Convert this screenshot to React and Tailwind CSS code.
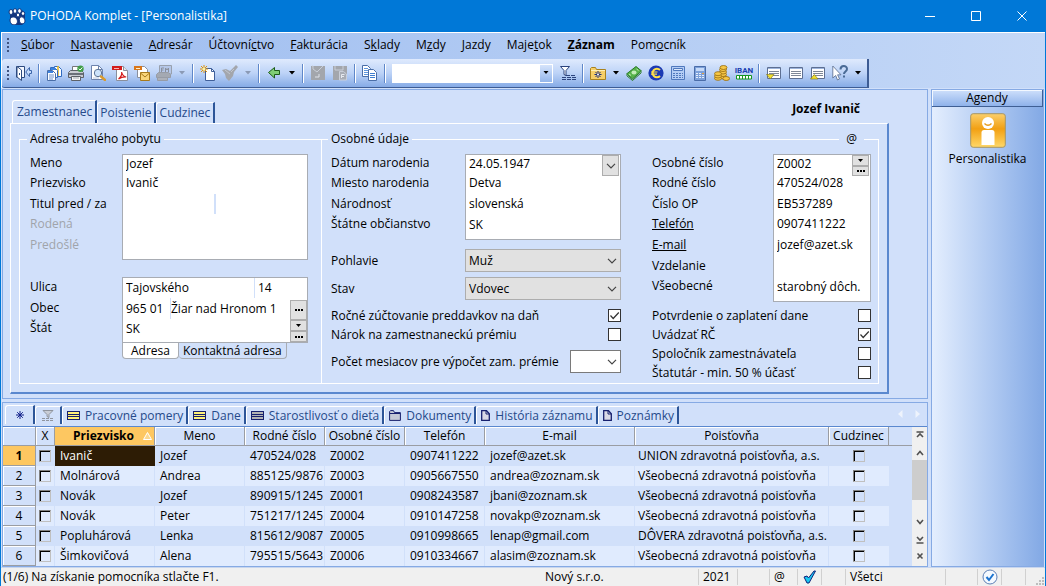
import React from "react";

const MENU = [
  ["", "S", "úbor"],
  ["", "N", "astavenie"],
  ["", "A", "dresár"],
  ["Účtovní", "c", "tvo"],
  ["", "F", "akturácia"],
  ["S", "k", "lady"],
  ["M", "z", "dy"],
  ["", "J", "azdy"],
  ["Maje", "t", "ok"],
  ["", "Z", "áznam"],
  ["Pom", "o", "cník"],
];

const ROWS = [
  ["Ivanič", "Jozef", "470524/028", "Z0002", "0907411222", "jozef@azet.sk", "UNION zdravotná poisťovňa, a.s."],
  ["Molnárová", "Andrea", "885125/9876", "Z0003", "0905667550", "andrea@zoznam.sk", "Všeobecná zdravotná poisťovňa"],
  ["Novák", "Jozef", "890915/1245", "Z0001", "0908243587", "jbani@zoznam.sk", "Všeobecná zdravotná poisťovňa"],
  ["Novák", "Peter", "751217/1245", "Z0004", "0910147258", "novakp@zoznam.sk", "Všeobecná zdravotná poisťovňa"],
  ["Popluhárová", "Lenka", "815612/9087", "Z0005", "0910998665", "lenap@gmail.com", "DÔVERA zdravotná poisťovňa, a.s."],
  ["Šimkovičová", "Alena", "795515/5643", "Z0006", "0910334667", "alasim@zoznam.sk", "Všeobecná zdravotná poisťovňa"],
];

function Svg({ children, w = 16, h = 16, className = "" }) {
  return (
    <svg width={w} height={h} viewBox={`0 0 ${w} ${h}`} className={`block shrink-0 ${className}`} aria-hidden="true">
      {children}
    </svg>
  );
}

const Page = ({ x, y, w = 8, h = 10, fill = "#fff", stroke = "#4a6ea8" }) => (
  <path d={`M${x} ${y}h${w - 3}l3 3v${h - 3}h-${w}z`} fill={fill} stroke={stroke} />
);

const ICONS = {
  exit: (
    <Svg>
      <path d="M.5 12.500V1.500H8.500V12.500H6" fill="#f4f8ff" stroke="#2c4a80" />
      <path d="M1 1.500L5.500 5V15.500L1 12z" fill="#fff" stroke="#2c4a80" />
      <path d="M3.500 8v2" stroke="#2c4a80" />
      <path d="M13.500 2.500L9.800 7l3.700 4.500V8.500H15.500v-3h-2z" fill="#c6dcfb" stroke="#3d66ab" />
    </Svg>
  ),
  docs: (
    <Svg>
      <path d="M8.500 1.500h4l3 3v7h-7z" fill="#fff" stroke="#2f6ac0" />
      <path d="M12 1v10" stroke="#e3b31c" strokeWidth="1.500" />
      <Page x={4.5} y={2.5} w={7} h={10} stroke="#2f6ac0" />
      <Page x={1.5} y={5.5} w={8} h={10} stroke="#4a6ea8" />
      <path d="M5 3h5v2H5z" fill="#3c82de" />
      <path d="M2 6h5v2H2z" fill="#3c82de" />
      <path d="M3 10h5M3 12h5M3 14h4" stroke="#6f94cd" />
    </Svg>
  ),
  print: (
    <Svg>
      <path d="M4.500 6V1.500h7V6" fill="#fff" stroke="#777" />
      <path d="M.5 7.500l2-2h11l2 2v5H.5z" fill="#c9ccd2" stroke="#5d6168" />
      <path d="M1 8h14v2H1z" fill="#6a6f78" />
      <path d="M3.500 11.500h9v4h-9z" fill="#f4f4f4" stroke="#5d6168" />
      <path d="M5 12.500h6v1H5z" fill="#a7abb2" />
      <circle cx="12.500" cy="3.700" r="3.200" fill="#3f9d46" />
      <path d="M10.800 3.700l1.300 1.300 2.200-2.500" stroke="#fff" fill="none" />
    </Svg>
  ),
  preview: (
    <Svg>
      <path d="M1.500 .5h7l4 4v10h-11z" fill="#fff" stroke="#6d83ad" />
      <path d="M8.500 .5v4h4" fill="none" stroke="#6d83ad" />
      <path d="M3 13h6" stroke="#b8c8e4" />
      <circle cx="8" cy="8" r="3.700" fill="#cde3fb" stroke="#5b7396" />
      <path d="M11 11.500l4 3.500" stroke="#d99a2b" strokeWidth="2.400" strokeLinecap="round" />
    </Svg>
  ),
  pdf: (
    <Svg>
      <path d="M4.500 1.500h7l4 4v10h-11z" fill="#fff" stroke="#8a8f9c" />
      <path d="M11.500 1.500v4h4" fill="#e3e6ec" stroke="#8a8f9c" />
      <path d="M0 1h10v4H0z" fill="#d21c1c" />
      <path d="M2 3.500h5" stroke="#f6b5b5" />
      <path d="M6.500 14c2-1.500 3.500-4 3.200-7 .5 3 2 4.500 4.500 5-3-.3-5 .3-7.700 2z" fill="none" stroke="#d21c1c" strokeWidth="1.200" />
    </Svg>
  ),
  mail: (
    <Svg>
      <path d="M3.500 1.500h7l3 3v8h-10z" fill="#fff" stroke="#8a8f9c" />
      <path d="M0 1h8v4H0z" fill="#d8761a" />
      <path d="M2 3.500h4" stroke="#fff0cf" />
      <path d="M6.500 7.500h9v8h-9z" fill="#f8d57b" stroke="#a87a1c" />
      <path d="M6.500 8l4.500 4 4.500-4" fill="none" stroke="#a87a1c" />
    </Svg>
  ),
  fm: (
    <Svg>
      <path d="M3.500 7V.5h12V9h-2" fill="#b5c7e8" stroke="#98a0ad" />
      <path d="M5.500 7V3H8M5.500 5h2M9.500 7V3l1.500 2L12.500 3v4" stroke="#8a909c" fill="none" />
      <path d="M.5 9.500l2-2h10l2 2v3H.5z" fill="#a4a9b2" stroke="#979ca6" />
      <path d="M1.500 12.500h10v3h-10z" fill="#adb1b9" stroke="#979ca6" />
    </Svg>
  ),
  fresh: (
    <Svg>
      <path d="M5.500 3.500h6l3 3v9h-9z" fill="#fff" stroke="#3f5f9a" />
      <path d="M11.500 3.500v3h3" fill="none" stroke="#3f5f9a" />
      <path d="M4 0v8M0 4h8M1 1l6 6M7 1L1 7" stroke="#e0930a" />
      <circle cx="4" cy="4" r="1.500" fill="#fff3a0" />
    </Svg>
  ),
  brush: (
    <Svg>
      <path d="M0 5l4-1 4 2 6-6 2 2-4 5-1 4-4 5-3-3-1-4z" fill="#a3a6ac" />
      <path d="M3 5l5 4M9 7l3-3" stroke="#c3c7cf" />
    </Svg>
  ),
  back: (
    <Svg>
      <path d="M8.500 2.500v3h5v4h-5v3.500l-6-5.500z" fill="#7fce75" stroke="#1d5c1a" />
    </Svg>
  ),
  book: (
    <Svg>
      <path d="M1 1h14v14H1z" fill="#a3a6ac" />
      <path d="M2 1h1v3l4 3 6-6" stroke="#c9ced8" fill="none" />
      <path d="M5 12h4v-3" stroke="#dfe3ea" fill="none" />
    </Svg>
  ),
  save: (
    <Svg>
      <path d="M1 1h14v14H1z" fill="#a3a6ac" />
      <path d="M3 1v4h8V1" stroke="#c9ced8" fill="none" />
      <path d="M7.500 6.500h4l3 2.500v6h-7z" fill="#a9adb5" stroke="#c9ced8" />
      <path d="M9.500 13V9.500h3M9.500 11.500h2.500" stroke="#e6e9ef" fill="none" />
    </Svg>
  ),
  copy: (
    <Svg>
      <Page x={0.5} y={0.5} w={8} h={11} />
      <path d="M2 3.500h4M2 5.500h5M2 7.500h5M2 9.500h5" stroke="#5f96dd" />
      <Page x={6.5} y={4.5} w={8} h={11} />
      <path d="M8 8.500h5M8 10.500h5M8 12.500h5" stroke="#3f7ed0" />
    </Svg>
  ),
  filter: (
    <Svg>
      <path d="M.5 1.500h9l-3.500 4v5l-2-1V5.500z" fill="#fff" stroke="#2b437c" />
      <path d="M6 10.500h10M2 12.500h14M2 14.500h14" stroke="#2b437c" strokeDasharray="4 1" />
    </Svg>
  ),
  folderStar: (
    <Svg>
      <path d="M.5 3.500l1-1h4l1 2h9v10H.5z" fill="#f6cf68" stroke="#a8821f" />
      <path d="M1 5.500h14" stroke="#fff0b5" />
      <path d="M8 6v7M4.500 9.500h7M5.500 7l5 5M10.500 7l-5 5" stroke="#1b2d7a" />
      <circle cx="8" cy="9.500" r="1" fill="#fff" />
    </Svg>
  ),
  money: (
    <Svg>
      <path d="M.5 9L10 1.500l5.500 4.500-9 8z" fill="#56b24a" stroke="#2a7a26" />
      <path d="M.5 10.500l6 5 9-8" fill="none" stroke="#2a7a26" />
      <ellipse cx="8" cy="7.500" rx="2.500" ry="2" fill="#c4ecb8" />
      <path d="M3 9l2 1.500M10.500 4l2 1.500" stroke="#c4ecb8" />
    </Svg>
  ),
  euro: (
    <Svg>
      <circle cx="8" cy="8" r="7.600" fill="#1b39b4" />
      <path d="M12 5A4.300 4.300 0 1 0 12 11" fill="none" stroke="#ffe04a" strokeWidth="2" />
      <path d="M3 7h6.500M3 9.200h6" stroke="#ffe04a" strokeWidth="1.200" />
    </Svg>
  ),
  calc: (
    <Svg>
      <path d="M1.500 1.500h13v13h-13z" fill="#b4cdf5" stroke="#4f78bd" />
      <path d="M3.500 3.500h9v2h-9z" fill="#dbe8fc" stroke="#4f78bd" />
      <path d="M3 8.500h10M3 10.500h10M3 12.500h10" stroke="#4f78bd" strokeDasharray="2 1" />
    </Svg>
  ),
  calc2: (
    <Svg>
      <path d="M2.500 1.500h11v14h-11z" fill="#7da1da" stroke="#4a6ca8" />
      <path d="M4 3h8v3H4z" fill="#c6daf8" />
      <path d="M4 8.500h8M4 10.500h8M4 12.500h8" stroke="#e6effc" strokeDasharray="2 1" />
      <path d="M10 8.500h2" stroke="#e8a13a" />
    </Svg>
  ),
  coins: (
    <Svg>
      <g fill="#f6c746" stroke="#96690c" strokeWidth=".8">
        <ellipse cx="9" cy="12" rx="3.500" ry="2" />
        <ellipse cx="9" cy="9.500" rx="3.500" ry="2" />
        <ellipse cx="9" cy="7" rx="3.500" ry="2" />
        <ellipse cx="9" cy="4.500" rx="3.500" ry="2" />
        <ellipse cx="9.500" cy="2.500" rx="3.500" ry="2" />
        <ellipse cx="4" cy="13.300" rx="3.500" ry="2" />
        <ellipse cx="4" cy="11" rx="3.500" ry="2" />
        <ellipse cx="4" cy="8.700" rx="3.500" ry="2" />
        <ellipse cx="12.200" cy="13.500" rx="3.400" ry="2" />
      </g>
    </Svg>
  ),
  iban: (
    <span className="flex flex-col items-center">
      <span className="font-['Roboto','Liberation_Sans',sans-serif] text-[8px] leading-[9px] font-bold text-[#1a3fb0]">IBAN</span>
      <Svg w={16} h={5}>
        <path d="M.5 .5h15v3.500H.5z" fill="#fff" stroke="#14961e" />
        <path d="M3.500 0v4M6.500 0v4M9.500 0v4M12.500 0v4" stroke="#14961e" />
      </Svg>
    </span>
  ),
  winDown: <WindowIcon mark="M.5 9.500h7.500l-3.700 4.500z" />,
  win: <WindowIcon />,
  winUp: <WindowIcon mark="M.5 14h7.500l-3.700-4.500z" />,
  help: (
    <Svg>
      <path d="M.8 1v12l2.900-2.500 1.800 4.500 2-1-1.900-4.200H9z" fill="#fff" stroke="#56688c" strokeWidth=".8" />
      <path d="M8.500 4.500C8.500 0 15 0 15 4c0 2.500-3 2.500-3 5" fill="none" stroke="#4a6b96" strokeWidth="2" />
      <path d="M11 10.500h2v2h-2z" fill="#4a6b96" />
    </Svg>
  ),
};

function WindowIcon({ mark }) {
  return (
    <Svg>
      <path d="M1.500 2.500h13v11h-13z" fill="#fff" stroke="#5d6f92" />
      <path d="M2 3.500h12" stroke="#9db4dc" />
      <path d="M3 6.500h10M3 8.500h10M3 10.500h10" stroke="#7e8797" />
      {mark && <path d={mark} fill="#f2e02e" stroke="#7a7010" strokeWidth=".6" />}
    </Svg>
  );
}

const Tool = ({ icon, label }) => (
  <button type="button" aria-label={label} className="flex h-6 w-[22px] items-center justify-center">
    {ICONS[icon]}
  </button>
);

const Drop = ({ off }) => (
  <button type="button" aria-label="Ďalšie možnosti" className="flex h-6 w-[14px] items-center justify-center">
    <Svg w={6} h={4}>
      <path d="M0 0h6L3 3.500z" fill={off ? "#8b9ab5" : "#000"} />
    </Svg>
  </button>
);

const Sep = () => <span className="mx-[3px] h-[19px] w-[2px] border-r border-l border-l-[#5f87c9] border-r-white" />;

const Grip = () => (
  <span className="flex w-[2px] flex-col gap-[2px]">
    {[0, 1, 2, 3].map((i) => (
      <span key={i} className="h-[2px] w-[2px] bg-[#3f5480]" />
    ))}
  </span>
);

const Chevron = () => (
  <Svg w={10} h={6}>
    <path d="M1 .8l4 4 4-4" fill="none" stroke="#444" strokeWidth="1.200" />
  </Svg>
);

const Dots = () => (
  <Svg w={8} h={2}>
    <path d="M0 0h2v2H0zM3 0h2v2H3zM6 0h2v2H6z" fill="#000" />
  </Svg>
);

const SMALL_BTN = "flex items-center justify-center border border-[#adadad] bg-[#e1e1e1]";
const BOX = "border border-[#a8acb3] bg-white";
const INPUT = "w-full min-w-0 bg-transparent p-0 pl-[3px] outline-none";

function Labels({ items, rows }) {
  return (
    <div className={`grid ${rows} items-center`}>
      {items.map(([text, id, kind]) => (
        <label
          key={id}
          htmlFor={id}
          className={`whitespace-nowrap ${kind === "off" ? "text-[#a0a4aa]" : ""} ${kind === "link" ? "underline" : ""}`}
        >
          {text}
        </label>
      ))}
    </div>
  );
}

function Check({ id, on, label }) {
  return (
    <div className="flex h-[19px] items-center justify-between">
      <label htmlFor={id} className="whitespace-nowrap">{label}</label>
      <span className="relative">
        <input id={id} type="checkbox" defaultChecked={on} className="block h-[13px] w-[13px] appearance-none border border-[#333] bg-white" />
        {on && (
          <Svg w={13} h={13} className="pointer-events-none absolute top-0 left-0">
            <path d="M2.500 6.500l2.700 3L10.800 3.500" fill="none" stroke="#333" strokeWidth="1.200" />
          </Svg>
        )}
      </span>
    </div>
  );
}

function Select({ id, value, className }) {
  return (
    <span className={`relative flex ${className}`}>
      <select id={id} defaultValue={value} className="h-[23px] w-full appearance-none border border-inherit bg-transparent py-0 pl-[3px] outline-none">
        <option value={value}>{value}</option>
      </select>
      <span className="pointer-events-none absolute inset-y-0 right-1 flex items-center">
        <Chevron />
      </span>
    </span>
  );
}

function GridCheck({ label }) {
  return (
    <input
      type="checkbox"
      aria-label={label}
      className="mx-auto block h-3 w-3 appearance-none border border-t-[#808080] border-r-[#c0c0c0] border-b-[#c0c0c0] border-l-[#808080] shadow-[inset_1px_1px_0_#000000]"
    />
  );
}

const StripeIcon = ({ grey }) => (
  <Svg w={13} h={9}>
    <path d="M0 0h13v9H0z" fill="#17206e" />
    <path d="M1 1h11v2H1zM1 4h11v1H1zM1 6h11v2H1z" fill={grey ? "#b4b4b4" : "#fff27a"} />
  </Svg>
);

const DocIcon = () => (
  <Svg w={9} h={11}>
    <path d="M.7 .7h4.800l2.800 3v6.600H.7z" fill="#d9d9e6" stroke="#17206e" strokeWidth="1.300" />
    <path d="M5 .7v3.300h3.300" fill="none" stroke="#17206e" />
  </Svg>
);

const FolderIcon = () => (
  <Svg w={12} h={11}>
    <path d="M.6 10.400V1.600L1.500 .6h3l1 2h5.900v7.800z" fill="#c4c9d6" stroke="#17206e" />
    <path d="M1 3.500h10" stroke="#17206e" />
  </Svg>
);

const AGENDA_TABS = [
  ["Pracovné pomery", <StripeIcon key="a" />],
  ["Dane", <StripeIcon key="b" />],
  ["Starostlivosť o dieťa", <StripeIcon key="c" grey />],
  ["Dokumenty", <FolderIcon key="d" />],
  ["História záznamu", <DocIcon key="e" />],
  ["Poznámky", <DocIcon key="f" />],
];

const TAB = "flex items-center whitespace-nowrap rounded-tl-[3px] border-t border-l border-r-2 border-t-white border-l-white border-r-[#2c5598] text-[#264a8a]";

function TitleBar() {
  return (
    <header className="flex h-8 items-center bg-[#0078d7] pl-[7px] text-white">
      <Svg w={18} h={17}>
        <path d="M2 2h5l3 3 4-3 3 3v9l-3 3H4l-2-4z" fill="#12357e" />
        <g fill="#fff" stroke="#12357e">
          <ellipse cx="3" cy="4" rx="2" ry="2.500" />
          <ellipse cx="7" cy="3" rx="1.900" ry="2.300" />
          <ellipse cx="11.500" cy="3" rx="1.900" ry="2.300" />
          <ellipse cx="15" cy="5.500" rx="1.700" ry="2" />
          <ellipse cx="10" cy="7" rx="1.700" ry="2" />
          <path d="M2 12c0-3 4-4 6-2s2 5.500-.5 6.500C4.500 17.500 2 15.500 2 12z" />
          <path d="M12.500 9c2-.8 4.500 1.500 4.500 4 0 3-3.500 3.500-5 1.500-1-1.600-1-4.500.5-5.500z" />
        </g>
      </Svg>
      <h1 className="flex-1 pl-1">POHODA Komplet - [Personalistika]</h1>
      {[
        ["Minimalizovať", "M0 5.500h10"],
        ["Maximalizovať", "M.5 .5h9v9h-9z"],
        ["Zavrieť", "M.5 .5l9 9M9.500 .5l-9 9"],
      ].map(([name, d]) => (
        <button key={name} type="button" aria-label={name} className="flex h-full w-[46px] items-center justify-center">
          <Svg w={10} h={10}>
            <path d={d} fill="none" stroke="#fff" />
          </Svg>
        </button>
      ))}
    </header>
  );
}

function Toolbar() {
  return (
    <div role="toolbar" aria-label="Panel nástrojov" className="flex h-[29px] w-fit items-center rounded-l-[3px] border-r-2 border-b border-[#3d5c94] bg-linear-to-b from-[#dfeafd] via-[#bdd3f7] to-[#86abe6] pr-[2px] pl-[5px]">
      <Grip />
      <span className="w-1" />
      <Tool icon="exit" label="Zavrieť agendu" />
      <Sep />
      <Tool icon="docs" label="Zostavy" />
      <Tool icon="print" label="Tlač" />
      <Tool icon="preview" label="Náhľad" />
      <Tool icon="pdf" label="PDF" />
      <Tool icon="mail" label="E-mail" />
      <Tool icon="fm" label="FM" />
      <Drop off />
      <Sep />
      <Tool icon="fresh" label="Nový záznam" />
      <Tool icon="brush" label="Označiť" />
      <Drop off />
      <Sep />
      <Tool icon="back" label="Späť" />
      <Drop />
      <Sep />
      <Tool icon="book" label="Uložiť" />
      <Tool icon="save" label="Uložiť ako" />
      <Sep />
      <Tool icon="copy" label="Kopírovať" />
      <Sep />
      <span className="mr-1 ml-[3px] flex h-[19px] w-[161px] border border-white bg-white">
        <input aria-label="Hľadať" className="w-full min-w-0 bg-white px-1 outline-none" />
        <button type="button" aria-label="Zoznam" className="flex w-3 shrink-0 items-center justify-center bg-linear-to-b from-[#d6e4fb] to-[#94b6eb]">
          <Svg w={6} h={4}>
            <path d="M.5 0h5L3 3z" fill="#000" />
          </Svg>
        </button>
      </span>
      <Tool icon="filter" label="Filter" />
      <Sep />
      <Tool icon="folderStar" label="Obľúbené" />
      <Drop />
      <Tool icon="money" label="Platby" />
      <Tool icon="euro" label="Euro" />
      <Tool icon="calc" label="Výpočet" />
      <Tool icon="calc2" label="Kalkulačka" />
      <Tool icon="coins" label="Mince" />
      <Tool icon="iban" label="IBAN" />
      <Sep />
      <Tool icon="winDown" label="Dolná tabuľka" />
      <Tool icon="win" label="Tabuľka" />
      <Tool icon="winUp" label="Horný formulár" />
      <Tool icon="help" label="Pomocník" />
      <Drop />
    </div>
  );
}

function AddressGroup() {
  return (
    <fieldset className="w-[303px] shrink-0 border border-white pr-[13px] pb-6 pl-[10px]">
      <legend className="-ml-[3px] px-[3px] leading-4">Adresa trvalého pobytu</legend>
      <div className="grid grid-cols-[92px_1fr] pt-[7px]">
        <Labels
          rows="grid-rows-[18px_21px_21px_20px_21px]"
          items={[
            ["Meno", "meno"],
            ["Priezvisko", "priezvisko"],
            ["Titul pred / za", "titul"],
            ["Rodená", "rodena", "off"],
            ["Predošlé", "predosle", "off"],
          ]}
        />
        <div className={`${BOX} grid grid-rows-[17px_21px_21px_20px_25px] items-center`}>
          <input id="meno" defaultValue="Jozef" className={INPUT} />
          <input id="priezvisko" defaultValue="Ivanič" className={INPUT} />
          <span className="flex h-5">
            <input id="titul" className={INPUT} />
            <input aria-label="Titul za" className={`${INPUT} border-l-2 border-[#d1e0fa]`} />
          </span>
          <input id="rodena" className={INPUT} />
          <input id="predosle" className={INPUT} />
        </div>
      </div>
      <div className="grid grid-cols-[92px_1fr] pt-[17px]">
        <Labels
          rows="grid-rows-[20px_21px_20px]"
          items={[
            ["Ulica", "ulica"],
            ["Obec", "psc"],
            ["Štát", "stat"],
          ]}
        />
        <div className={`${BOX} flex`}>
          <div className="grid flex-1 grid-rows-[20px_21px_20px] pb-[3px]">
            <span className="grid grid-cols-[131px_1fr]">
              <input id="ulica" defaultValue="Tajovského" className={INPUT} />
              <input aria-label="Číslo domu" defaultValue="14" className={`${INPUT} border-l border-[#d1e0fa]`} />
            </span>
            <span className="grid grid-cols-[47px_1fr]">
              <input id="psc" defaultValue="965 01" className={INPUT} />
              <input aria-label="Obec" defaultValue="Žiar nad Hronom 1" className="w-full min-w-0 border-l border-[#d1e0fa] bg-transparent outline-none" />
            </span>
            <input id="stat" defaultValue="SK" className={INPUT} />
          </div>
          <div className="flex w-[17px] flex-col pt-[22px]">
            <button type="button" aria-label="Vybrať obec" className={`${SMALL_BTN} h-5`}><Dots /></button>
            <button type="button" aria-label="Zoznam štátov" className={`${SMALL_BTN} h-[11px]`}>
              <Svg w={5} h={3}><path d="M0 0h5L2.500 3z" fill="#000" /></Svg>
            </button>
            <button type="button" aria-label="Vybrať štát" className={`${SMALL_BTN} h-[11px]`}><Dots /></button>
          </div>
        </div>
        <span />
        <div className="flex" role="tablist">
          <button type="button" role="tab" className="h-4 rounded-b-[4px] border border-t-0 border-[#a8acb3] bg-white px-2 leading-[14px]">Adresa</button>
          <button type="button" role="tab" className="h-4 rounded-b-[4px] border border-t-0 border-l-0 border-[#a8acb3] bg-[#d1e0fa] px-[4px] leading-[14px]">Kontaktná adresa</button>
        </div>
      </div>
    </fieldset>
  );
}

function PersonalGroup() {
  return (
    <fieldset className="relative flex-1 border border-l-0 border-white pr-[7px] pl-[9px]">
      <legend className="-ml-[3px] px-[3px] leading-4">Osobné údaje</legend>
      <span className="absolute -top-4 right-[14px] bg-[#d1e0fa] px-[7px] leading-4">@</span>
      <div className="flex justify-between gap-[30px] pt-[7px]">
        <div className="w-[290px]">
          <div className="grid grid-cols-[1fr_156px]">
            <Labels
              rows="grid-rows-[18px_21px_21px_20px]"
              items={[
                ["Dátum narodenia", "datum"],
                ["Miesto narodenia", "miesto"],
                ["Národnosť", "narodnost"],
                ["Štátne občianstvo", "obcianstvo"],
              ]}
            />
            <div className={`${BOX} grid grid-rows-[17px_21px_21px_25px]`}>
              <span className="relative flex">
                <input id="datum" defaultValue="24.05.1947" className={INPUT} />
                <button type="button" aria-label="Kalendár" className={`${SMALL_BTN} absolute top-0 right-[1px] h-[21px] w-[17px]`}><Chevron /></button>
              </span>
              <input id="miesto" defaultValue="Detva" className={INPUT} />
              <input id="narodnost" defaultValue="slovenská" className={INPUT} />
              <input id="obcianstvo" defaultValue="SK" className={`${INPUT} h-5`} />
            </div>
          </div>
          <div className="grid grid-cols-[1fr_156px] items-center gap-y-[5px] pt-[9px] pb-[6px]">
            <label htmlFor="pohlavie">Pohlavie</label>
            <Select id="pohlavie" value="Muž" className="border-[#adadad] bg-[#e1e1e1]" />
            <label htmlFor="stav">Stav</label>
            <Select id="stav" value="Vdovec" className="border-[#adadad] bg-[#e1e1e1]" />
          </div>
          <Check id="zuct" on label="Ročné zúčtovanie preddavkov na daň" />
          <Check id="narok" label="Nárok na zamestnaneckú prémiu" />
          <div className="flex items-center justify-between pt-[6px]">
            <label htmlFor="mesiace">Počet mesiacov pre výpočet zam. prémie</label>
            <Select id="mesiace" value="" className="w-[51px] border-[#7a7a7a] bg-white" />
          </div>
        </div>
        <div className="w-[219px]">
          <div className="grid grid-cols-[1fr_98px]">
            <Labels
              rows="grid-rows-[18px_21px_21px_20px_21px_21px_20px]"
              items={[
                ["Osobné číslo", "oc"],
                ["Rodné číslo", "rc"],
                ["Číslo OP", "op"],
                ["Telefón", "tel", "link"],
                ["E-mail", "email", "link"],
                ["Vzdelanie", "vzdelanie"],
                ["Všeobecné", "vseobecne"],
              ]}
            />
            <div className={`${BOX} grid grid-rows-[17px_21px_21px_20px_21px_21px_25px]`}>
              <span className="relative flex">
                <input id="oc" defaultValue="Z0002" className={INPUT} />
                <span className="absolute top-0 right-[1px] flex w-[17px] flex-col">
                  <button type="button" aria-label="Zoznam čísel" className={`${SMALL_BTN} h-[11px]`}>
                    <Svg w={5} h={3}><path d="M0 0h5L2.500 3z" fill="#000" /></Svg>
                  </button>
                  <button type="button" aria-label="Vybrať číslo" className={`${SMALL_BTN} h-[10px]`}><Dots /></button>
                </span>
              </span>
              <input id="rc" defaultValue="470524/028" className={INPUT} />
              <input id="op" defaultValue="EB537289" className={INPUT} />
              <input id="tel" defaultValue="0907411222" className={INPUT} />
              <input id="email" defaultValue="jozef@azet.sk" className={INPUT} />
              <input id="vzdelanie" className={INPUT} />
              <input id="vseobecne" defaultValue="starobný dôch." className={`${INPUT} h-5`} />
            </div>
          </div>
          <div className="pt-1">
            <Check id="potvrdenie" label="Potvrdenie o zaplatení dane" />
            <Check id="uvadzat" on label="Uvádzať RČ" />
            <Check id="spolocnik" label="Spoločník zamestnávateľa" />
            <Check id="statutar" label="Štatutár - min. 50 % účasť" />
          </div>
        </div>
      </div>
    </fieldset>
  );
}

const HEAD = "border-r border-b border-[#9a9da3] bg-[#d1e0fa] p-0 text-center font-normal shadow-[inset_1px_1px_0_#ffffff]";

function RecordsTable() {
  return (
    <table className="w-full table-fixed border-separate border-spacing-0">
      <colgroup>
        <col className="w-[33px]" />
        <col className="w-[19px]" />
        <col className="w-[100px]" />
        <col className="w-[90px]" />
        <col className="w-[80px]" />
        <col className="w-[80px]" />
        <col className="w-[80px]" />
        <col className="w-[150px]" />
        <col className="w-[194px]" />
        <col className="w-[60px]" />
        <col />
      </colgroup>
      <thead>
        <tr className="h-[19px]">
          <th className={HEAD} aria-label="Poradie" />
          <th className={HEAD}>X</th>
          <th className="border-r border-b border-[#9a9da3] bg-[#fdc761] p-0">
            <span className="flex items-center justify-end gap-[9px] pr-[2px] font-bold">
              Priezvisko
              <Svg w={9} h={8}><path d="M.5 7.500h8L4.500 .5z" fill="#fbd88f" stroke="#fff" /></Svg>
            </span>
          </th>
          {["Meno", "Rodné číslo", "Osobné číslo", "Telefón", "E-mail", "Poisťovňa", "Cudzinec"].map((h) => (
            <th key={h} className={HEAD}>{h}</th>
          ))}
          <th className="border-b border-[#9a9da3] p-0" aria-label="Voľné" />
        </tr>
      </thead>
      <tbody>
        {ROWS.map((row, i) => {
          const bg = i % 2 ? "bg-[#e0ebfe]" : "bg-[#d1e0fa]";
          const cell = `border-r border-[#d1e0fa] p-0 pl-[5px] whitespace-nowrap ${bg}`;
          return (
            <tr key={i} className="h-5">
              <th className={i === 0 ? "border-r border-b border-[#9a9da3] bg-[#fdc761] p-0 font-bold" : HEAD}>{i + 1}</th>
              <td className={`border-r border-[#d1e0fa] p-0 ${bg}`}><GridCheck label={`Označiť ${row[0]}`} /></td>
              {row.map((v, j) => (
                <td key={j} className={i === 0 && j === 0 ? "bg-[#2d1c05] p-0 pl-[5px] text-white" : j === 6 ? `border-r border-[#d1e0fa] p-0 pl-[3px] whitespace-nowrap ${bg}` : cell}>{v}</td>
              ))}
              <td className={`p-0 ${bg}`}><GridCheck label={`Cudzinec ${row[0]}`} /></td>
              <td className="p-0" />
            </tr>
          );
        })}
      </tbody>
    </table>
  );
}

function ScrollIcon({ d }) {
  return (
    <Svg w={8} h={8}>
      <path d={d} fill="none" stroke="#505050" strokeWidth="1.600" />
    </Svg>
  );
}

export default function App() {
  return (
    <div className="flex min-h-screen flex-col border-r border-b border-l border-[#0078d7] bg-linear-to-r from-[#9dbcef] to-[#c4d8f7] font-['Open_Sans','Noto_Sans',sans-serif] text-[12px] leading-4 text-black">
      <TitleBar />
      <div className="border-t border-l border-white">
        <nav className="flex h-[26px] items-center pb-[2px] pl-[5px]">
          <Grip />
          <ul className="flex pl-1">
            {MENU.map(([a, b, c]) => (
              <li key={b + c}>
                <button type="button" className={`px-2 ${b === "Z" ? "font-bold" : ""}`}>
                  {a}
                  <span className="underline">{b}</span>
                  {c}
                </button>
              </li>
            ))}
          </ul>
        </nav>
        <Toolbar />
      </div>

      <div className="flex flex-1 gap-[3px] bg-[#d1e0fa] px-px pt-[1px]">
        <main className="flex min-w-0 flex-1 flex-col gap-[3px]">
          <section className="border border-[#86aae4] bg-[#d1e0fa] pt-[10px] pr-[38px] pb-1 pl-[7px]">
            <div className="flex h-[23px] items-end justify-between">
              <div className="flex items-end pl-[2px]" role="tablist">
                <button type="button" role="tab" className={`${TAB} h-[23px] pr-[3px] pl-[4px]`}>Zamestnanec</button>
                <button type="button" role="tab" className={`${TAB} h-[21px] px-[2px]`}>Poistenie</button>
                <button type="button" role="tab" className={`${TAB} h-[21px] px-[3px]`}>Cudzinec</button>
              </div>
              <strong className="pr-[29px] pb-[6px]">Jozef Ivanič</strong>
            </div>
            <div className="flex border-t border-r-2 border-b-2 border-l border-t-white border-r-[#5a88cf] border-b-[#5a88cf] border-l-white pt-[7px] pr-2 pb-2 pl-2">
              <AddressGroup />
              <PersonalGroup />
            </div>
          </section>

          <section className="flex flex-1 flex-col border border-[#86aae4] bg-[#d1e0fa]">
            <div className="flex h-6 items-end border-b border-[#5a88cf] pb-[2px] pl-[2px]">
              <button type="button" aria-label="Všetko" className={`${TAB} h-[19px] w-[30px] justify-center`}>
                <Svg w={8} h={8}><path d="M4 0v8M0 4h8M1.200 1.200l5.600 5.600M6.800 1.200L1.200 6.800" stroke="#12208a" /></Svg>
              </button>
              <button type="button" aria-label="Filter" className={`${TAB} h-[18px] w-[27px] justify-center`}>
                <Svg w={12} h={11}>
                  <path d="M1 .5h10l-4 4v3l-2-1V4.500z" fill="#c9cdd6" stroke="#8f949e" />
                  <path d="M0 8.500h12M0 10.500h12" stroke="#8f949e" strokeDasharray="3 1" />
                </Svg>
              </button>
              {AGENDA_TABS.map(([name, icon]) => (
                <button key={name} type="button" className={`${TAB} h-[18px] gap-[5px] pr-[3px] pl-[4px]`}>
                  {icon}
                  {name}
                </button>
              ))}
              <span className="flex-1" />
              <span className="flex gap-3 self-center pr-[7px]">
                <Svg w={5} h={8}><path d="M4.500 0v8L0 4z" fill="#eef3fc" /></Svg>
                <Svg w={5} h={8}><path d="M.5 0v8L5 4z" fill="#eef3fc" /></Svg>
              </span>
            </div>
            <div className="flex flex-1">
              <div className="min-w-0 flex-1">
                <RecordsTable />
              </div>
              <div className="flex w-[15px] shrink-0 flex-col items-center bg-[#f0f0f0] pt-1">
                <ScrollIcon d="M.5 1h7M1 6l3-3 3 3" />
                <span className="h-[10px]" />
                <ScrollIcon d="M1 6l3-3.500L7 6" />
                <span className="mt-[3px] h-[40px] w-full bg-[#cdcdcd]" />
                <span className="flex-1" />
                <ScrollIcon d="M1 2l3 3.500L7 2" />
                <span className="h-[10px]" />
                <ScrollIcon d="M1 1l3 3 3-3M.5 7h7" />
                <span className="h-2" />
                <ScrollIcon d="M1.500 1.500l5 5M6.500 1.500l-5 5" />
                <span className="h-[6px]" />
              </div>
            </div>
          </section>
        </main>

        <aside className="flex w-[113px] shrink-0 flex-col border border-[#86aae4] bg-linear-to-r from-[#e4eefe] to-[#83a9e5]">
          <h2 className="h-[17px] border-r border-b border-[#3f5f94] bg-linear-to-b from-[#cfe0fb] to-[#8fb2ea] text-center shadow-[inset_1px_1px_0_#f3f8ff]">Agendy</h2>
          <button type="button" className="flex flex-col items-center gap-[3px] pt-[6px]">
            <Svg w={36} h={35}>
              <defs>
                <linearGradient id="tile" x1="0" y1="0" x2="0" y2="1">
                  <stop offset="0" stopColor="#fbcf6b" />
                  <stop offset=".45" stopColor="#f2a013" />
                  <stop offset="1" stopColor="#ffd868" />
                </linearGradient>
              </defs>
              <rect x=".7" y=".7" width="34.600" height="33.600" rx="2.500" fill="url(#tile)" stroke="#a69565" />
              <circle cx="18" cy="10" r="6" fill="#fff" />
              <path d="M14.500 10.500q3.500 3.500 7 0" fill="none" stroke="#e59a18" strokeWidth="1.400" />
              <path d="M11.500 32V19.500q0-2.500 2.500-2.500h8q2.500 0 2.500 2.500V32z" fill="#fff" />
            </Svg>
            Personalistika
          </button>
        </aside>
      </div>

      <footer className="flex h-[19px] items-center border-t border-[#c8d6ee] bg-[#f0f0f0] pl-[2px]">
        <span className="w-[542px] shrink">(1/6) Na získanie pomocníka stlačte F1.</span>
        <span className="flex-1 whitespace-nowrap">Nový s.r.o.</span>
        <span className="w-[39px] border-l border-[#d0d0d0] pl-1">2021</span>
        <span className="h-4 w-8 border-l border-[#d0d0d0]" />
        <span className="w-7 border-l border-[#d0d0d0] pl-1">@</span>
        <span className="flex h-4 w-6 items-center justify-center border-l border-[#d0d0d0]">
          <Svg w={13} h={14}>
            <path d="M1 7l3-1 1.500 2L11 1h1.500L6 13H4z" fill="#19c8f0" stroke="#10207a" />
          </Svg>
        </span>
        <span className="h-4 w-6 border-l border-[#d0d0d0]" />
        <span className="w-[100px] border-l border-[#d0d0d0] pl-1">Všetci</span>
        <span className="h-4 w-8 border-l border-[#d0d0d0]" />
        <span className="flex h-4 w-6 items-center justify-center border-l border-[#d0d0d0]">
          <Svg>
            <circle cx="8" cy="8" r="7" fill="#f4f9ff" stroke="#5d7fb5" />
            <path d="M4.500 8l2.500 3 4.500-6" fill="none" stroke="#1b73cf" strokeWidth="2" />
          </Svg>
        </span>
        <span className="h-4 w-6 border-l border-[#d0d0d0]" />
        <span className="flex h-4 w-5 items-end justify-end border-l border-[#d0d0d0] pr-px">
          <Svg w={8} h={8}>
            <path d="M6 0h2v2H6zM3 3h2v2H3zM6 3h2v2H6zM0 6h2v2H0zM3 6h2v2H3zM6 6h2v2H6z" fill="#bdbdbd" />
          </Svg>
        </span>
      </footer>
    </div>
  );
}
